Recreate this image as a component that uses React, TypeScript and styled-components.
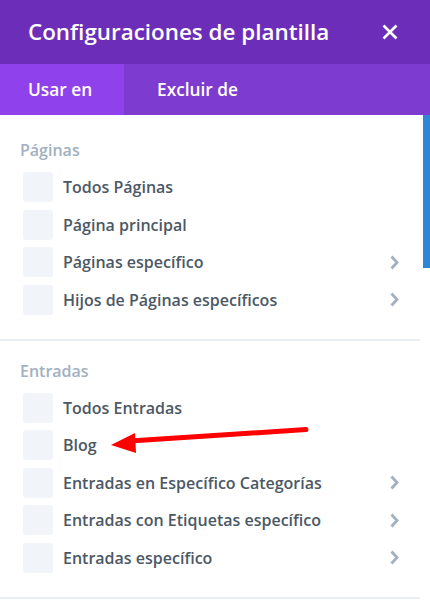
import React from "react";
import styled, { createGlobalStyle } from "styled-components";

const Global = createGlobalStyle`
  html, body { margin: 0; padding: 0; background: #fff; }
  body { font-family: "Open Sans", "Noto Sans", sans-serif; -webkit-font-smoothing: antialiased; }
  * { box-sizing: border-box; }
`;

const Modal = styled.div`
  position: relative;
  width: 430px;
  height: 601px;
  overflow: hidden;
  background: #fff;
  display: flex;
  flex-direction: column;
`;

const Header = styled.div`
  height: 64px;
  flex: none;
  background: #6c2eb9;
  display: flex;
  align-items: center;
  justify-content: space-between;
  padding: 0 32px 0 28px;
`;

const Title = styled.h1`
  margin: 0;
  color: #fff;
  font-size: 22.4px;
  font-weight: 600;
  line-height: 30px;
  letter-spacing: 0;
`;

const CloseButton = styled.button`
  border: 0;
  padding: 0;
  background: transparent;
  width: 16px;
  height: 16px;
  display: flex;
  align-items: center;
  justify-content: center;
  cursor: pointer;
`;

const Tabs = styled.div`
  height: 51px;
  flex: none;
  background: #7e3bd0;
  display: flex;
`;

const Tab = styled.div<{ $active?: boolean; $pad: number }>`
  height: 100%;
  display: flex;
  align-items: center;
  padding-left: ${(p) => p.$pad}px;
  width: 124px;
  background: ${(p) => (p.$active ? "#8f42ec" : "transparent")};
  color: #fff;
  font-size: 17.3px;
  font-weight: 600;
  white-space: nowrap;
`;

const Body = styled.div`
  flex: 1;
  display: flex;
  padding-top: 5px;
`;

const List = styled.div`
  flex: 1;
  display: flex;
  flex-direction: column;
`;

const Track = styled.div`
  width: 7px;
  margin-left: 3px;
  margin-top: -5px;
`;

const Thumb = styled.div`
  height: 153px;
  background: #2b87da;
`;

const Section = styled.section`
  padding: 20px 21px 20px 0;
  border-bottom: 2px solid #e9eef5;
  display: flex;
  flex-direction: column;
`;

const SectionTitle = styled.div`
  padding-left: 20px;
  color: #a2b0c1;
  font-size: 16px;
  font-weight: 600;
  line-height: 20px;
  margin-bottom: 8.5px;
`;

const Row = styled.div`
  height: 37.5px;
  display: flex;
  align-items: center;
  padding-left: 23px;
`;

const Check = styled.span`
  width: 30px;
  height: 30px;
  border-radius: 3px;
  background: #f1f4f8;
  flex: none;
`;

const Label = styled.span`
  margin-left: 10px;
  flex: 1;
  color: #4c5866;
  font-size: 16px;
  font-weight: 600;
  white-space: nowrap;
`;

const Chevron = styled.svg`
  width: 9px;
  height: 15px;
  flex: none;
`;

const Annotation = styled.svg`
  position: absolute;
  left: 0;
  top: 0;
  width: 430px;
  height: 601px;
  pointer-events: none;
`;

type Item = { label: string; more?: boolean };

const sections: { title: string; items: Item[] }[] = [
  {
    title: "Páginas",
    items: [
      { label: "Todos Páginas" },
      { label: "Página principal" },
      { label: "Páginas específico", more: true },
      { label: "Hijos de Páginas específicos", more: true },
    ],
  },
  {
    title: "Entradas",
    items: [
      { label: "Todos Entradas" },
      { label: "Blog" },
      { label: "Entradas en Específico Categorías", more: true },
      { label: "Entradas con Etiquetas específico", more: true },
      { label: "Entradas específico", more: true },
    ],
  },
];

export default function App() {
  return (
    <>
      <Global />
      <Modal>
        <Header>
          <Title>Configuraciones de plantilla</Title>
          <CloseButton aria-label="Cerrar">
            <svg width="16" height="16" viewBox="0 0 16 16">
              <path d="M1.5 1.5 L14.5 14.5 M14.5 1.5 L1.5 14.5" stroke="#fff" strokeWidth="2.6" strokeLinecap="butt" />
            </svg>
          </CloseButton>
        </Header>
        <Tabs>
          <Tab $active $pad={28}>Usar en</Tab>
          <Tab $pad={33}>Excluir de</Tab>
        </Tabs>
        <Body>
          <List>
            {sections.map((s) => (
              <Section key={s.title}>
                <SectionTitle>{s.title}</SectionTitle>
                {s.items.map((it) => (
                  <Row key={it.label}>
                    <Check />
                    <Label>{it.label}</Label>
                    {it.more && (
                      <Chevron viewBox="0 0 9 15">
                        <path d="M1.5 1.5 L7 7.5 L1.5 13.5" fill="none" stroke="#a2b0c1" strokeWidth="2.8" />
                      </Chevron>
                    )}
                  </Row>
                ))}
              </Section>
            ))}
          </List>
          <Track>
            <Thumb />
          </Track>
        </Body>
        <Annotation viewBox="0 0 430 601">
          <path d="M130 441 L306 429.5" stroke="#ff0000" strokeWidth="5" strokeLinecap="round" />
          <polygon points="111,445 135,433 136,453" fill="#ff0000" />
        </Annotation>
      </Modal>
    </>
  );
}
